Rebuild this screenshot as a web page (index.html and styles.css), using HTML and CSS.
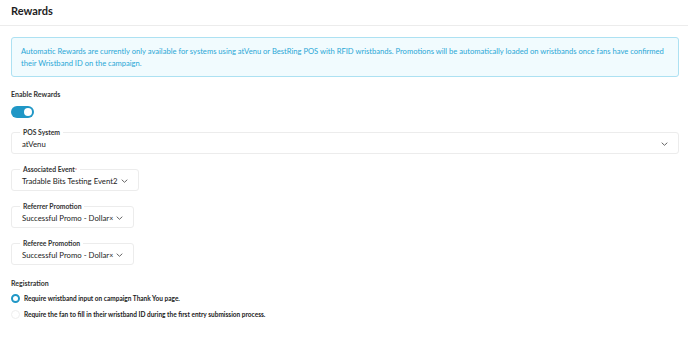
FILE: index.html
```html
<!DOCTYPE html>
<html>
<head>
<meta charset="utf-8">
<link rel="stylesheet" href="styles.css">
</head>
<body>
<div class="header"><h1 class="title">Rewards</h1></div>
<div class="content">
  <div class="info">Automatic Rewards are currently only available for systems using atVenu or BestRing POS with RFID wristbands. Promotions will be automatically loaded on wristbands once fans have confirmed their Wristband ID on the campaign.</div>

  <div class="label enable-label">Enable Rewards</div>
  <div class="toggle"><span class="knob"></span></div>

  <div class="field full">
    <span class="legend">POS System</span>
    <span class="value">atVenu</span>
    <svg class="chev" width="7" height="4" viewBox="0 0 7 4"><path d="M0.7 0.7l2.8 2.6 2.8-2.6" fill="none" stroke="#666" stroke-width="1"/></svg>
  </div>

  <div class="field w-event">
    <span class="legend">Associated Event<span class="req">*</span></span>
    <span class="value">Tradable Bits Testing Event2</span>
    <svg class="chev" width="7" height="4" viewBox="0 0 7 4"><path d="M0.7 0.7l2.8 2.6 2.8-2.6" fill="none" stroke="#666" stroke-width="1"/></svg>
  </div>

  <div class="field w-promo">
    <span class="legend">Referrer Promotion</span>
    <span class="value">Successful Promo - Dollar<span class="x">×</span></span>
    <svg class="chev" width="7" height="4" viewBox="0 0 7 4"><path d="M0.7 0.7l2.8 2.6 2.8-2.6" fill="none" stroke="#666" stroke-width="1"/></svg>
  </div>

  <div class="field w-promo">
    <span class="legend">Referee Promotion</span>
    <span class="value">Successful Promo - Dollar<span class="x">×</span></span>
    <svg class="chev" width="7" height="4" viewBox="0 0 7 4"><path d="M0.7 0.7l2.8 2.6 2.8-2.6" fill="none" stroke="#666" stroke-width="1"/></svg>
  </div>

  <div class="label reg-label">Registration</div>
  <div class="radio-row first"><span class="radio on"></span><span class="rtext">Require wristband input on campaign Thank You page.</span></div>
  <div class="radio-row"><span class="radio"></span><span class="rtext">Require the fan to fill in their wristband ID during the first entry submission process.</span></div>
</div>
</body>
</html>
```
FILE: styles.css
```css
* { box-sizing: border-box; }
html, body { margin: 0; padding: 0; background: #fff; }
body { font-family: Lato, "Open Sans", sans-serif; color: #222; }

.header { height: 26px; border-bottom: 1px solid #ececec; padding: 0 11px; display: flex; align-items: center; }
.title { margin: 0; font-size: 11px; font-weight: 700; color: #1e1e1e; line-height: 1; position: relative; top: -2px; }

.content { padding: 11px 9px 0 11px; }

.info {
  background: #f1fbfe;
  border: 1px solid #ade1f2;
  border-radius: 3px;
  color: #2aa7d6;
  font-size: 7.6px;
  line-height: 11.5px;
  padding: 8px 4px 8px 9px;
  height: 40px;
}

.label { font-size: 7px; font-weight: 700; color: #333; line-height: 9px; }
.enable-label { margin-top: 13px; }

.toggle { margin-top: 7px; width: 23px; height: 12px; border-radius: 6px; background: #2097c6; position: relative; }
.knob { position: absolute; right: 2px; top: 2px; width: 8px; height: 8px; border-radius: 50%; background: #fff; }

.field {
  position: relative;
  border: 1px solid #ececec;
  border-radius: 3px;
  height: 22px;
  display: flex;
  align-items: center;
  padding: 0 10px;
  margin-top: 15px;
}
.field.full { margin-top: 14px; }
.w-event { width: 128px; }
.w-promo { width: 123px; }
.legend {
  position: absolute;
  left: 8px;
  top: -5px;
  background: #fff;
  padding: 0 3px;
  font-size: 6.8px;
  font-weight: 700;
  color: #333;
  line-height: 9px;
}
.req { color: #e0403a; font-weight: 400; font-size: 6px; vertical-align: top; }
.value { font-size: 7.75px; color: #222; line-height: 10px; padding-top: 1px; white-space: nowrap; }
.x { font-size: 7px; }
.chev { position: absolute; right: 10px; top: 9px; }

.reg-label { margin-top: 14px; }
.radio-row { display: flex; align-items: center; height: 16px; }
.radio-row.first { margin-top: 2px; }
.radio { width: 9px; height: 9px; border-radius: 50%; border: 1px solid #eee; margin-right: 4px; flex: none; }
.radio.on { background: #fff; border: 2.5px solid #2097c6; }
.rtext { font-size: 6.5px; font-weight: 700; color: #222; }
```
